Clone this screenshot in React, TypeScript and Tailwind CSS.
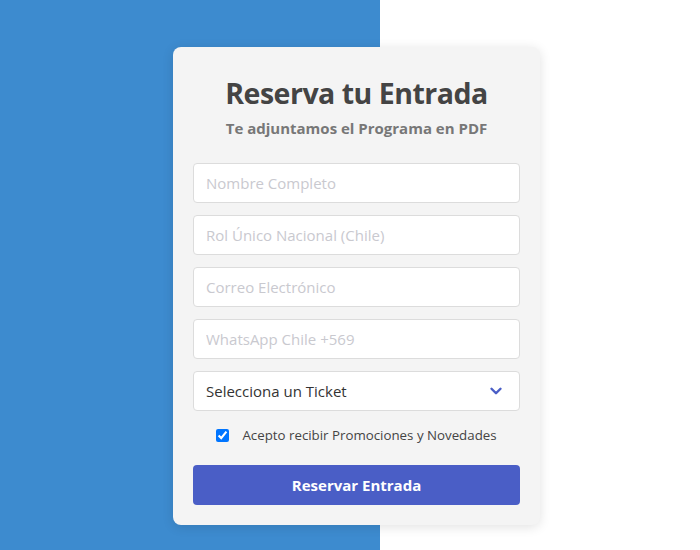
import { ChevronDown } from "lucide-react";

const fields = [
  "Nombre Completo",
  "Rol Único Nacional (Chile)",
  "Correo Electrónico",
  "WhatsApp Chile +569",
];

export default function App() {
  return (
    <div
      className="h-[550px] w-[700px] overflow-hidden bg-[linear-gradient(to_right,#3d8bcf_380px,#ffffff_380px)] pt-[47px] pl-[173px]"
      style={{ fontFamily: '"Open Sans", sans-serif' }}
    >
      <div className="flex w-[367px] flex-col rounded-lg bg-[#f4f4f4] px-5 pt-[26px] pb-5 shadow-[0_2px_12px_rgba(0,0,0,0.12)]">
        <h1 className="text-center text-[28.5px] leading-[40px] font-bold tracking-[-0.5px] text-[#444444]">
          Reserva tu Entrada
        </h1>
        <p className="mt-[5px] text-center text-[15px] leading-5 font-bold text-[#777777]">
          Te adjuntamos el Programa en PDF
        </p>

        <div className="mt-[25px] flex flex-col gap-3">
          {fields.map((f) => (
            <input
              key={f}
              type="text"
              placeholder={f}
              className="h-10 w-full rounded border border-[#dcdcdc] bg-white px-3 text-[15px] text-[#333] outline-none placeholder:text-[#c9c9cf]"
            />
          ))}
          <div className="flex h-10 w-full items-center justify-between rounded border border-[#dcdcdc] bg-white pr-[14px] pl-3 text-[15px] text-[#333]">
            <span>Selecciona un Ticket</span>
            <ChevronDown className="h-[18px] w-[18px] text-[#4a5ec6]" strokeWidth={3.2} />
          </div>
        </div>

        <label className="mt-[15px] flex items-center justify-center gap-[13px] text-[13.3px] text-[#444]">
          <input type="checkbox" defaultChecked className="h-[13px] w-[13px] accent-[#0075ff]" />
          <span>Acepto recibir Promociones y Novedades</span>
        </label>

        <button
          type="button"
          className="mt-[19px] h-10 w-full rounded bg-[#4a5ec6] text-[15px] font-bold text-white"
        >
          Reservar Entrada
        </button>
      </div>
    </div>
  );
}
